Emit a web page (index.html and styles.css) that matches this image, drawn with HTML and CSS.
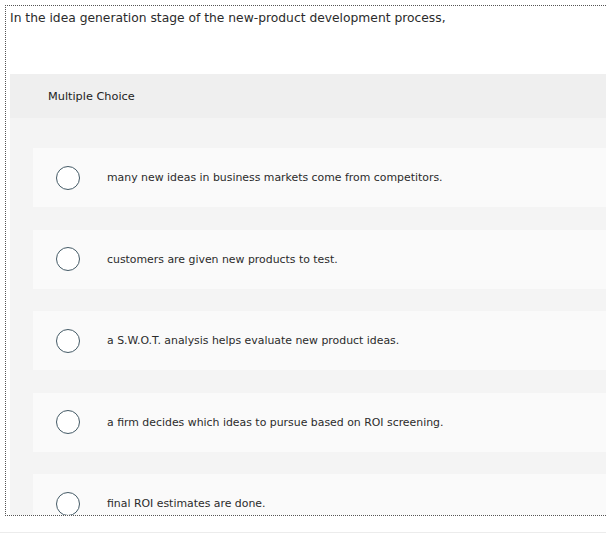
FILE: index.html
```html
<!DOCTYPE html>
<html>
<head>
<meta charset="utf-8">
<link rel="stylesheet" href="styles.css">
</head>
<body>
<div class="frame">
  <div class="prompt">In the idea generation stage of the new-product development process,</div>
  <div class="panel">
    <div class="panel-head">Multiple Choice</div>
    <div class="options">
      <div class="option"><span class="radio"></span><span class="label">many new ideas in business markets come from competitors.</span></div>
      <div class="option"><span class="radio"></span><span class="label">customers are given new products to test.</span></div>
      <div class="option"><span class="radio"></span><span class="label">a S.W.O.T. analysis helps evaluate new product ideas.</span></div>
      <div class="option"><span class="radio"></span><span class="label">a firm decides which ideas to pursue based on ROI screening.</span></div>
      <div class="option"><span class="radio"></span><span class="label">final ROI estimates are done.</span></div>
    </div>
  </div>
</div>
<div class="footer"></div>
</body>
</html>
```
FILE: styles.css
```css
html, body {
  margin: 0;
  padding: 0;
  background: #fff;
  overflow: hidden;
}
body {
  font-family: "DejaVu Sans", "Liberation Sans", sans-serif;
  color: #333;
  width: 606px;
  height: 542px;
}
.frame {
  margin: 5px 0 0 5px;
  width: 596px;
  height: 509px;
  border: 1px dotted #555;
  border-right: none;
  padding-left: 4px;
  overflow: hidden;
  box-sizing: content-box;
}
.prompt {
  height: 68px;
  font-size: 12.3px;
  line-height: 16px;
  padding-top: 4px;
  box-sizing: border-box;
  color: #2b2b2b;
}
.panel {
  background: #f4f4f4;
  height: 500px;
}
.panel-head {
  background: #efefef;
  height: 44px;
  display: flex;
  align-items: center;
  padding-left: 38px;
  font-size: 11.3px;
  color: #222;
}
.options {
  padding: 30px 0 0 23px;
  display: flex;
  flex-direction: column;
  gap: 22.5px;
}
.option {
  background: #fafafa;
  height: 59px;
  display: flex;
  align-items: center;
  padding-left: 23px;
}
.radio {
  width: 22px;
  height: 22px;
  border: 1.5px solid #445a66;
  border-radius: 50%;
  background: #fff;
  flex: none;
}
.label {
  margin-left: 27px;
  font-size: 10.9px;
  color: #2b2b2b;
}
.footer {
  margin-top: 16px;
  border-top: 1px solid #ececec;
  height: 10px;
}
```
